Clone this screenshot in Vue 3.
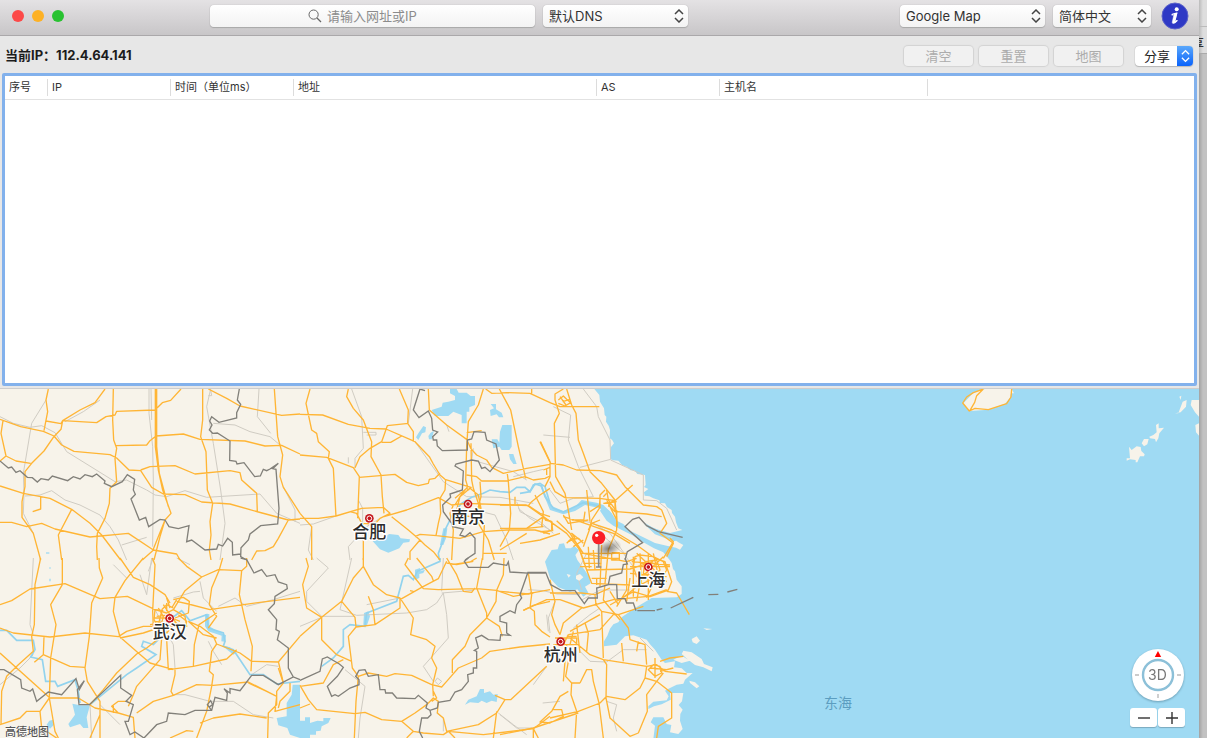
<script setup>
import { ref } from 'vue'

const query = ref('')
const dns = ref('默认DNS')
const provider = ref('Google Map')
const language = ref('简体中文')
const share = ref('分享')
const currentIp = '112.4.64.141'
const actions = ['清空', '重置', '地图']
const columns = [
  { name: '序号', cls: 'c-index' },
  { name: 'IP', cls: 'c-mid' },
  { name: '时间（单位ms）', cls: 'c-mid' },
  { name: '地址', cls: 'c-address' },
  { name: 'AS', cls: 'c-mid' },
  { name: '主机名', cls: 'c-host' },
  { name: '', cls: 'c-rest' }
]

const cities = [
  { name: '合肥', x: 1108, y: 388 },
  { name: '南京', x: 1404, y: 345 },
  { name: '武汉', x: 509, y: 688 },
  { name: '杭州', x: 1682, y: 758 },
  { name: '上海', x: 1945, y: 534 }
]

const land =
  'M0,0H1783L1798,18 1800,38 1812,58 1814,78 1819,83 1818,98 1826,110 1830,123 1829,148 1836,152 1842,163 1833,174 1832,181 1832,211 1840,214 1855,215 1866,228 1880,233 1892,244 1905,245 1912,255 1935,258 1937,288 1932,294 1945,300 1932,310 1934,320 1948,322 1960,328 1978,334 1980,342 1995,343 2001,354 2015,363 2016,372 2025,383 2028,400 2035,418 2047,423 2010,432 1960,418 1925,395 1950,415 1985,435 2015,445 2035,460 2050,468 2040,482 2028,476 2000,470 1965,462 1930,445 1890,425 1870,405 1850,395 1828,365 1810,352 1800,365 1820,395 1840,410 1870,425 1900,440 1930,460 1962,478 1990,490 2005,507 2015,522 2019,540 2025,547 2030,572 2045,592 2045,615 2030,625 1955,627 1935,639 1905,657 1865,685 1855,700 1840,706 1830,719 1822,740 1812,757 1812,772 1850,767 1875,742 1900,739 1940,752 1950,766 1965,782 1985,812 1995,822 2025,817 2022,835 2045,838 2060,852 2078,852 2055,872 2050,884 2030,887 2010,897 1995,905 2006,922 2000,934 1960,938 1945,952 1945,960 1962,952 1985,946 2012,932 2010,912 2050,912 2046,937 2036,948 2048,962 2041,975 2040,995 2048,1020 2035,1035 2010,1030 2014,1008 2000,1005 1990,985 1960,985 1952,1000 1965,1010 1960,1050H0Z'

const tiles = [
  {
    x: 0, y: -27,
    roads: 'M145,27 138,60 143,95 132,152M0,118 62,140 130,154 162,168 185,195 222,214 330,224 350,234 387,270 422,272 455,322 490,342 555,344 605,366 690,372 775,396 865,420 900,417M9,122 3,160 18,228 48,243 92,250M0,243 18,228M315,27 285,68 240,90 188,122 183,148 160,172 132,213 95,250 75,275 75,320 66,365 66,412 100,460 122,540M138,123 183,131 188,122 290,128 318,110 345,105 350,94 465,90 487,68 512,61 543,27M340,27 338,120 341,180 350,205 345,235 350,305 330,325 328,370 315,415 292,460 290,500 292,540M466,27V200L475,270 488,330 513,400 495,420 480,470 462,540M470,27V200L478,280 505,380M348,197 440,195 450,182 468,168 550,162 600,178 735,183 795,198 845,196 900,222M422,270 450,260 525,257 585,282 690,272 720,278 725,300 770,340 772,396M608,27V120L602,170 618,215 622,330 638,370 630,425 633,465 628,510 633,540M625,27 680,55 720,78 845,106 900,102M823,27 833,170 848,225 840,290 850,322 900,400M0,318 70,340 150,355 215,388 270,430 305,465 362,540M122,350V387L98,395M0,427H35L80,440 125,430 165,447 270,471 385,460 460,510 530,522 540,540M215,388 175,465 185,540M865,420 835,475 820,500 795,512 770,513 755,540M427,540 458,512 495,420',
    rails: 'M138,60 95,130 70,280 72,340 70,400 100,460M0,110 40,130 90,142 125,137 165,158 200,215 345,305 380,300 440,330 465,345 500,350 555,332 620,352 780,342 830,400 900,430M447,27V100L458,200 460,300 458,500M453,27 455,120M75,348 120,345 155,332 195,360 240,375 300,405 330,440 355,480 380,540M632,27 620,80 640,190 662,330 675,430 660,540M777,27 772,110 812,160M640,130 705,135 750,155 810,170 840,195M300,60 250,95 195,125M365,495 440,472M850,320 885,390 885,425M625,47H635L632,30',
    borders: 'M0,243 25,264 35,261 48,277 60,272 82,292 97,293 112,306 123,296 145,300 157,288 203,302 220,290 240,297 255,284 277,290 290,282 315,303 313,310 335,320 367,305 382,284 404,298 400,330 406,343 393,357 418,420 437,412 446,440 480,418 495,420 507,440 535,446 567,437 560,485 575,480 615,510 650,507 655,493 668,498 683,475 697,487 698,525 722,522M718,27 712,60 722,73 710,98 710,114 657,127 635,110 629,123 636,135 628,150 638,160 652,159 690,183 689,241 708,244 711,252 732,248 764,290 781,288 790,268 800,272 810,267 835,250 818,266 828,268 837,385 833,432 782,437 750,462 745,480 723,503 722,530 740,540',
    water: 'M138,517H148V521H138Z', rivers: ''
  },
  {
    x: 900, y: -27,
    roads: 'M30,27 18,70 35,150 50,160 55,185 88,215 85,235 100,265 108,410M0,103 68,105 145,133 210,145 258,147 345,185 388,230 400,252 420,285 435,298 515,323M145,27 140,50 160,85 190,120 205,160 215,185 213,230 243,285 247,350 252,400M0,225 80,232 160,263 178,290 173,415M325,130 262,137 245,185 210,205 180,230 165,263M245,187H272L305,168M298,27 325,90 323,130 340,155 340,185M178,292 285,283 320,307 355,317 385,310 388,298 405,295 420,280M385,27 388,90 440,135 500,178 512,205 530,225 560,240 575,262 610,280 680,265 750,253M550,27 535,75 505,125 500,200 497,300 503,320 480,350 465,375M513,190 515,300 520,325M500,158 545,152M557,27 575,40 620,38 690,40 750,68M695,27V45M598,27 632,90 655,200 677,295M722,185 750,245M500,285 530,290 545,303 620,303 675,290 700,300 735,295 750,288M437,298 435,330 420,355 422,400 415,430 408,467M0,415H55L108,408 185,385 250,382 270,400 240,415 225,432 185,430 170,400 150,395M252,410 320,390 415,353 455,375 500,370 685,377 695,365 720,345 750,325M622,282 625,305 632,400 628,450 600,500M0,400 35,440V540M190,430V540M275,410 325,450 360,480 375,495 400,515 420,540M360,480 330,515V540M345,470 360,463 410,467 480,475 550,455 620,450 705,450 750,462M520,325 540,385 535,430 565,480 583,540M685,377 720,400 750,410M548,540 553,435M480,350 510,325 535,345 543,385 520,410 490,408 470,390ZM465,355 500,325 508,330M540,305 543,350 530,400M460,375 450,400 460,450 455,540M620,520H548M645,350V372',
    rails: 'M155,27 185,110 190,205 165,235V265M190,157H228V165H200M0,435 40,432 108,408M345,185 430,305 500,350M500,350 600,352 700,370M325,130 338,27M545,395 585,405 620,480 640,540M240,415 200,440 145,500 150,540M520,205 515,240 640,275 680,300M35,440 25,510 40,540M145,232V250M440,135 447,155M175,360 188,385V430M655,385 690,415 750,450M640,290 700,275 730,268',
    borders: 'M360,27 340,90 357,113 385,93 395,115 398,150 413,156 398,170 400,180 410,180 412,198 427,212 502,210 502,180 515,177 522,155 555,157 560,180 588,192 598,240 570,275 555,262 545,265 535,243 515,240 468,252 465,258 485,270 490,273 487,330 450,342 452,352 428,375 430,395 455,430 458,440 490,447 480,465 495,470 510,458 525,475 525,520 495,540M360,27 375,32',
    water: 'M450,27H470L476,38H500L512,48H525V75L508,82V95H500V130H485V105L460,95 445,108H405L395,90 425,80 428,68 445,65 465,60V48L450,40ZM570,90 582,85 572,72H588V88L605,98 610,112H597L590,103 572,108ZM600,155 607,135H635V200L628,210H605L598,200 580,205 575,178H592L598,188ZM627,222H640L650,252H640L630,238ZM355,160 370,138 378,142 376,157 366,160 355,180 348,172ZM385,168 392,158 402,152 395,178H387ZM215,480 240,478 268,462 295,465 302,475 330,478 328,486 310,488 298,505 265,518 240,508Z M430,445H442L438,475 430,495H420Z',
    rivers: 'M418,540 415,520 430,480 435,450 460,400 485,370 515,352 550,340 570,330 600,335 630,337 650,322 675,322 690,335 700,315 720,310 735,320 750,370'
  },
  {
    x: 1500, y: -27,
    roads: 'M150,68 180,80 298,80M190,27 165,42 165,60 178,100 163,130 167,290 195,340 203,380 215,450M200,27 215,75 228,100 235,180 250,220 270,275 305,310 345,360 352,440M120,185 152,250 190,255 230,270 300,272 350,285 375,320 430,375 470,380 485,390 500,430 480,460 520,490 500,530M150,305 165,335 195,353 300,355 345,362 398,315M150,250V290L135,320M350,395 440,402 485,410M80,375 130,410 200,460 240,510M105,345 130,395 125,440M300,355 298,385 275,420 268,450 250,500M190,410 240,425 340,460 390,490M175,60 190,48 200,58 212,68 195,78 175,70M180,50 198,75M188,65 210,58M120,455 158,452 155,425 135,420M205,485 225,475 215,460 240,480M315,330 300,345V385M315,370 345,365M310,350 320,340M325,375 345,395V360M255,395 250,430M320,360 350,420M0,375H80M130,270 150,262M140,265V285M0,445 80,445 130,440M0,510 80,460M80,445 130,410M215,420H250M270,395 300,375',
    rails: 'M250,27 290,80 295,110 330,180 332,238 240,262M160,80 212,105 205,180 235,260 280,350 220,355 180,370 150,330M130,165 210,172M332,240 430,285V360L470,362 500,385 530,450M50,365 60,395 120,425 160,460M240,420 280,430 330,460 380,530',
    borders: 'M548,472 475,455 440,437 417,412 398,418 375,440 428,488 382,515 375,540',
    water: 'M118,312 130,330 155,378 190,393 225,380 245,360 290,368 310,375 335,400 350,425 375,440 348,440 325,420 300,385 255,375 225,393 190,403 150,390Z M430,430 470,448 500,468 540,480 520,484 465,463Z',
    rivers: 'M60,340 90,335 105,312 125,318 135,350 160,385 190,396 250,368 300,378'
  },
  {
    x: 1560, y: 303,
    roads: 'M110,92 150,130 190,190 240,200 320,215 350,205M0,160 60,150 120,130M215,100 275,120 350,165 405,205M290,60V120L265,180 257,260 250,330 300,390M200,240 330,237 400,215M205,120 215,100 240,90M150,130 175,170 200,240 215,280 330,285M260,0 265,30 290,65M130,75 145,100 205,90M180,190H320M185,205H300M190,220H245M180,180 200,240M205,170 208,235M220,180 225,240M245,165 240,290M275,190V210H298V188H275M150,150 175,145 190,160M140,160 155,145 170,160M160,170 190,150M230,265V285M215,265H260M180,230H215M345,200 360,195 400,200 430,215 440,240 425,265 385,270 350,260 340,230ZM340,200V320M360,190 365,290M375,215 410,210 420,240 400,260 370,250ZM330,230H450M335,215 450,225M330,250 440,260M385,190V330M400,190 420,280M350,190 440,275M350,275 430,200M300,330 350,290 390,270M270,345 340,305 390,320 445,300 455,275 435,215 405,205M320,215V300L290,350M200,0 210,95M70,85 95,95V120L70,130M430,205 460,155 450,145M280,30 265,50M250,40 290,35',
    rails: 'M240,130 310,190 340,230M185,330 240,300 330,300M200,190 170,250 185,300',
    borders: '',
    water: 'M75,215 95,180 113,178 118,162 132,160 137,175H152L163,168 177,180 166,195 172,210 190,235 208,260 212,280 195,290 205,308 190,320 172,298 150,305 115,292 90,265Z M430,185 450,190 468,205 465,216 445,205Z',
    rivers: ''
  },
  {
    x: 0, y: 507,
    roads: 'M0,140 35,128 90,93 195,77 300,122 382,115 465,155 490,158M122,0 105,80 103,200 95,235 100,280 55,320 20,355 5,400 3,500M187,0V80L152,140 168,200 152,300 150,360 148,420 165,520 175,540M297,0 298,30 308,60 275,135 268,235 255,330 262,370 300,430V540M430,0 375,68 345,118 340,160 360,237 415,285 450,315 520,335M360,0 400,58 450,80 495,110 510,135M457,0 465,20 458,160 460,210M0,210 40,225 150,237 255,225 355,236 380,220 430,205H475M485,235 440,270 410,288 350,345 310,395 270,440M475,210 430,225 360,240M0,285 150,420H235L285,450 355,465 400,478 405,540M103,313 130,290 210,325 255,328M130,290 132,235M535,0 560,25 605,57 555,98 520,155M605,57 655,35 725,38 740,25V0M668,0 658,35 635,90 628,140 650,175 625,210M725,38 718,110 725,140 735,185 757,265 753,340M900,118 780,133 715,142 630,155 565,138 530,130M520,125 550,118 568,130 565,165 525,180M500,245 505,335M580,325 583,260 597,200 650,165M505,335 580,325 680,303 710,275M755,310 835,312 900,235M565,190 600,205 640,235 650,258 720,285 755,310M650,258 635,280 628,340 640,350 635,385 620,460 590,540M485,240 480,305 410,385 400,410 385,445M525,335V350L513,400 520,412 590,380 640,382 745,372 830,415M410,465 460,430 520,412M510,540 560,518 580,520M600,495 640,480 720,468 800,480M745,375 800,400 830,415 825,460 900,440M835,310 850,375 830,400V440L805,465 803,540M0,500 60,480 80,460 120,460 148,420M120,460 125,510 170,540M355,465 335,445 355,430 385,430M300,470 270,540M340,465V440M565,190 610,230 650,240',
    rails: 'M100,0 90,200 100,230M420,50 440,110 455,0M465,155 520,260 525,330M600,100 580,102 520,120M600,70 610,120 650,160M555,410 630,430 700,430 760,470 820,480M520,410 555,410M270,440 275,540M0,380 60,330 100,290M900,100 820,125 740,145 705,120 655,145M625,250 640,280 665,320M460,0 445,40M340,20 380,60M755,350 800,320 835,325M530,0 570,20M300,440 360,500',
    borders: 'M0,335H12L62,365 65,390 90,400 98,393 110,430 145,402 185,410 228,362 238,395 253,368 232,395 237,440H268L362,352V390L395,412 378,430 400,440 385,490H375L390,530 405,522 432,540 470,500 500,490 505,465 555,470 585,457H635L645,418 680,427 682,405 672,392 690,405V392L720,398 755,352H790L835,380 880,357 900,365M635,457 622,440 632,428 638,440 626,448M722,0 740,5 762,45 785,35 800,55 825,50 835,72 860,80 862,92 825,115 823,137 805,155 830,185 828,215 838,220 832,245 865,270V330L880,357',
    water: 'M217,437 240,442H270L260,478 265,510H250L240,498 210,508 205,498 225,470ZM148,488 160,485 162,500 150,512 140,500ZM878,380H900V540L870,530 862,510 835,502 830,480 860,475V435L875,410ZM148,28H152V32H148ZM148,62H152V70H148ZM615,168H628V205L650,218 678,232 676,252 664,250 665,233 625,220 615,205ZM665,262 690,268 708,285 700,290Z',
    rivers: 'M0,217H20L50,247 100,247 105,275 92,297 127,305 137,370 165,370 173,385 225,365 235,400 240,435M270,440 380,350 410,330 468,290 425,265 430,250 460,260 480,240 510,185 545,158 570,188 620,170 625,210 670,225 675,250 670,265 700,275 750,350 790,350 830,378 900,370'
  },
  {
    x: 0, y: 507,
    roads: 'M465,155 500,165 520,155 555,175 560,205 525,195 500,225 475,210 462,185ZM475,150 490,175 480,215M490,140 510,170 540,210M485,155 500,140 520,150M500,120 510,150M460,180H500M450,200 480,195 520,205M535,170 560,190 555,210M515,150 530,125M515,180 540,190M485,160 475,200M465,190 500,195M470,175 495,172M500,135V160M835,330 850,375M835,450 840,430 870,400V375',
    rails: 'M450,205 500,210', borders: '', water: '', rivers: ''
  },
  {
    x: 900, y: 507,
    roads: 'M18,0 25,25 8,80 20,150 65,178V245L110,290 155,310M190,0V25L160,60 125,130 65,178 0,235M190,25 220,80 260,110 300,120 340,180 332,230 380,245 405,265 395,300 410,330 398,380 400,415M325,0 315,20 345,60 370,92 415,95 530,92 590,97 640,115 750,95M300,125 365,88 415,62 440,10M350,0 395,55 400,68M225,200 220,155 205,115M125,130 150,160 165,178 168,207 225,200 300,150 300,120M168,207 145,235 157,330 175,355 168,430 163,540M175,355 205,345 260,355 285,347 335,352 395,380 425,387 440,370 475,330 545,300 570,280 660,267 750,258M457,345V305L495,265 510,230 560,180 598,205 607,235M440,0 470,50 490,100 515,103 525,90M547,0 530,90 560,165V180L588,130 590,97 610,50 612,0M685,45 695,110 690,150 703,160 705,200 725,220 750,237M670,157 700,142 750,130M0,382 25,425 50,455 165,467 195,463 245,485 305,490 345,465 380,440 400,420 415,430 412,465 430,480 440,520 535,500 590,465 615,425M585,412 615,425H632L740,325M305,490 340,520 370,525 430,530 445,520 550,530 700,512 750,475M445,520 465,540M590,460 580,540M0,385 70,375 100,320 130,305M0,450 30,438M440,15 470,20 520,10M455,20 510,12 530,0M330,98 340,100M320,540 340,520M700,512 715,540M395,430 410,420 400,400',
    rails: 'M155,0 120,155 170,172 320,165 380,155 410,135 430,105 440,170 445,240 370,325 400,370M200,140 300,120M50,0 85,30 20,100V130L65,175H165M430,0 425,100M595,465 640,500 680,530M135,335 195,385 180,480 175,540M410,465 430,480V520M405,370 412,360 425,370 415,380ZM0,205 65,178M425,105 520,97M740,170 745,220M740,325 700,380',
    borders: 'M0,367 60,340 67,303 82,297 118,318 130,328 112,355 82,385 95,415 105,410 115,415 150,390 177,380V365L167,355 177,337 195,335 205,355 235,350 240,395H255L257,405 277,405 290,420 345,422 355,412 382,435 378,450 390,457 412,450 415,433 450,427 465,402 485,395 505,370 503,350 520,345V330H530V280L523,277 535,270 527,240 545,232 565,245 600,247 602,230 630,232 620,225V195L600,190V175L630,158 645,165 650,140 665,120 660,110 683,45 630,42 625,12 620,22 580,15 565,28H505L493,10 505,0M390,457 393,470 383,480H365L358,520 368,540M683,45H737',
    water: 'M0,488 15,488V478H30V495L52,488 70,490V480H92L85,495 65,505 62,518 48,520V530H30V540H0ZM495,440 505,425 530,415 540,393H552V405L570,400 580,410 593,408 590,432 575,428 560,435 545,428 535,435 510,433ZM192,165 205,160 210,175 200,205 190,200ZM345,35 360,30V40L375,35 370,45 358,48V60L345,65Z',
    rivers: 'M65,325 100,300 130,265 130,215 150,200 195,205 200,165 290,130 310,55 325,52 340,65 352,40 420,10V0'
  },
  {
    x: 1500, y: 507,
    roads: 'M150,65 160,110 165,130 155,170 165,200 180,230M70,157 140,125 180,125 250,150 340,125 445,115 500,95M180,230 190,195 245,150M205,230 300,215 340,170 355,170M210,240 270,290 310,305 440,325M285,110 288,140 305,160 355,170 385,210 390,245 435,260 440,320M305,160 310,300M355,170 430,145M365,255 370,310M410,280 415,250M440,325 470,320 495,340 560,348M440,325 435,360 470,370 490,345M480,310 510,300 550,295M435,360 420,390 375,425 320,415 300,435 235,460 150,480M310,305 320,320 318,420 330,480 390,535 415,525M205,310 197,355 215,375 213,410 230,460 225,540M240,375 215,375M240,375 260,335 275,335 280,370 297,435 310,540M470,370 515,405V480L475,505 470,540M205,400 180,415 155,460 120,492 150,495 190,475 185,455H160M470,370 440,410 442,460 415,525M0,530 100,510 235,465M100,510V540M500,100 530,105 568,170M150,105 245,105 285,110 330,90M165,240H230V260H165M205,230 190,260 160,260M220,220 210,260M240,285 230,200M200,235H230M255,195 265,225 260,280M420,75 410,130M200,260 195,310 190,370M445,335 460,320 480,325 485,345 465,355ZM465,300V360M450,330 500,335M480,340 520,330M210,220 300,170M390,60 380,130M330,100 355,140M465,65 440,120M0,100 85,108 100,105',
    rails: 'M150,225 145,180 165,130M240,280 270,310 320,312 370,275 440,275M220,210 270,170 300,150M320,430 350,440 340,480 350,520M128,435 180,430M85,95 130,98 170,108 240,110M550,280 600,310M420,240 460,280M0,470 50,510 100,510',
    borders: 'M82,43H137L152,80 185,98H225L253,137 265,120H292L290,90 325,80 330,55 365,45 370,20 382,18 375,0M325,80H350L352,122H375L380,135H400L408,158M412,158H465M470,156 487,152M512,150 580,118M625,110 655,109M682,102 712,94',
    water: '', rivers: ''
  }
]

const islands =
  'M2050,785 2075,790 2105,810 2112,825 2138,835 2135,847 2110,835 2085,828 2062,810 2045,795ZM2075,750 2090,742 2100,755 2090,765 2078,760ZM2110,718 2137,720 2120,723ZM2068,875 2085,880 2098,892 2090,898 2070,882ZM1728,560 1740,555 1750,565 1738,575 1728,570ZM1700,555 1712,558 1706,566ZM2020,812 2045,800 2070,815 2045,822Z'
const eastIslands =
  'M88,66 70,85 88,108 145,104 195,86 210,68 213,55 222,55 215,42H135L100,53ZM567,215 575,225 590,214 602,216 604,228 614,238 612,244H600L592,262H587V255L570,253 560,257V250H570ZM605,205 612,192H626L622,208 612,214ZM628,185 640,180 650,172 648,150 656,145V160L672,158 658,175 655,190 648,202 645,192 630,190ZM705,115H715L728,80 740,75 738,95 722,112ZM755,75H777V125L765,112 752,90ZM766,150 777,145V182L768,172ZM755,150 763,145ZM718,65 724,62 722,75Z'
const islandRoad = 'M130,42 100,53 80,66 68,84 88,108 105,100 145,104 200,86 213,66 215,42M130,42 110,62 104,82 90,106'
</script>

<template>
  <div class="desktop">
    <main class="window">
      <header class="titlebar">
        <div class="lights">
          <button class="light red" aria-label="关闭"></button>
          <button class="light amber" aria-label="最小化"></button>
          <button class="light green" aria-label="缩放"></button>
        </div>
        <label class="field search">
          <svg width="14" height="14" viewBox="0 0 14 14" fill="none" stroke="#666" aria-hidden="true">
            <circle cx="5.6" cy="5.6" r="4.6" />
            <path d="M9 9l4 4" stroke-width="1.3" />
          </svg>
          <input v-model="query" type="text" placeholder="请输入网址或IP" aria-label="网址或IP" />
        </label>
        <div class="field pick dns">
          <select v-model="dns" aria-label="DNS"><option>默认DNS</option></select>
          <svg class="chev" viewBox="0 0 10 14" aria-hidden="true"><path d="M1 5l4-4 4 4M1 9l4 4 4-4" /></svg>
        </div>
        <div class="field pick provider">
          <select v-model="provider" aria-label="地图服务"><option>Google Map</option></select>
          <svg class="chev" viewBox="0 0 10 14" aria-hidden="true"><path d="M1 5l4-4 4 4M1 9l4 4 4-4" /></svg>
        </div>
        <div class="field pick language">
          <select v-model="language" aria-label="语言"><option>简体中文</option></select>
          <svg class="chev" viewBox="0 0 10 14" aria-hidden="true"><path d="M1 5l4-4 4 4M1 9l4 4 4-4" /></svg>
        </div>
        <button class="info" aria-label="关于">
          <svg width="28" height="28" viewBox="0 0 28 28" aria-hidden="true">
            <circle cx="14" cy="14" r="13" fill="#2f39c5" stroke="#5b62c9" />
            <circle cx="15.7" cy="7.2" r="2" fill="#fff" />
            <path d="M10.6 12.6C12.3 12 13.7 11.4 15.8 11.2L13.6 19.5C13.4 20.6 14.3 20.3 16 18.3M10.6 12.8l2-.2" fill="none" stroke="#fff" stroke-width="1.2" />
            <path d="M13 12.2L15.8 11.2 13.9 19.2C13.8 20.2 14.6 19.8 16 18.2L16.5 18.6C14.5 21.6 11 22.6 11.3 20z" fill="#fff" stroke="#fff" stroke-width=".5" />
          </svg>
        </button>
      </header>

      <section class="toolbar">
        <strong>当前IP：{{ currentIp }}</strong>
        <div class="actions">
          <button v-for="a in actions" :key="a" class="action" disabled>{{ a }}</button>
          <div class="share">
            <select v-model="share" aria-label="分享"><option>分享</option></select>
            <span class="stepper">
              <svg class="chev" viewBox="0 0 10 14" aria-hidden="true"><path d="M1 5l4-4 4 4M1 9l4 4 4-4" /></svg>
            </span>
          </div>
        </div>
      </section>

      <section class="results">
        <table>
          <thead>
            <tr><th v-for="(c, i) in columns" :key="i" :class="c.cls" scope="col">{{ c.name }}</th></tr>
          </thead>
          <tbody></tbody>
        </table>
      </section>

      <section class="map">
        <svg class="canvas" viewBox="0 0 3597 1047" preserveAspectRatio="xMinYMin slice" role="img" aria-label="地图">
          <defs>
            <radialGradient id="shade"><stop offset="0" stop-color="#333" stop-opacity=".6" /><stop offset="1" stop-color="#333" stop-opacity="0" /></radialGradient>
          </defs>
          <path :d="land" class="land" />
          <g v-for="(t, i) in tiles" :key="'w' + i" :transform="`translate(${t.x} ${t.y})`">
            <path :d="t.water" class="water" />
            <path :d="t.rails" class="rail" />
            <path :d="t.rivers" class="river" />
          </g>
          <path :d="islands" class="land" />
          <g v-for="(t, i) in tiles" :key="'r' + i" :transform="`translate(${t.x} ${t.y})`">
            <path :d="t.roads" class="road" />
          </g>
          <g v-for="(t, i) in tiles" :key="'b' + i" :transform="`translate(${t.x} ${t.y})`">
            <path :d="t.borders" class="border" />
          </g>
          <g transform="translate(2820 -42)">
            <path :d="eastIslands" class="land" />
            <path :d="islandRoad" class="road" />
          </g>
          <g v-for="c in cities" :key="c.name">
            <circle :cx="c.x" :cy="c.y" r="13" fill="#c4161c" />
            <circle :cx="c.x" :cy="c.y" r="7" fill="#c4161c" stroke="#fff" stroke-width="3" />
            <text :x="c.x" :y="c.y + 58" class="city">{{ c.name }}</text>
          </g>
          <ellipse cx="1826" cy="478" rx="40" ry="24" fill="url(#shade)" transform="rotate(-20 1826 478)" />
          <path d="M1796 450V534M1788 534H1804" stroke="#8a8a8a" stroke-width="5" />
          <circle cx="1796" cy="446" r="20" fill="#fb1f27" />
          <circle cx="1790" cy="439" r="5" fill="#fff" />
          <text x="2514" y="957" class="sea">东海</text>
        </svg>
        <span class="credit">高德地图</span>
        <div class="controls">
          <button class="compass" aria-label="3D">
            <svg width="54" height="54" viewBox="0 0 54 54" aria-hidden="true">
              <circle cx="27" cy="27" r="26" fill="#fff" />
              <circle cx="27" cy="27" r="15" fill="#fff" stroke="#8cc0d8" stroke-width="2.4" />
              <path d="M27 3l3.2 6h-6.4z" fill="#f00" />
              <path d="M4 27h4M46 27h4M27 46v4" stroke="#bbb" stroke-width="1.4" />
            </svg>
            <span>3D</span>
          </button>
          <div class="zoom">
            <button aria-label="缩小"><svg width="12" height="12" viewBox="0 0 12 12" aria-hidden="true"><path d="M0 6h12" /></svg></button>
            <button aria-label="放大"><svg width="12" height="12" viewBox="0 0 12 12" aria-hidden="true"><path d="M0 6h12M6 0v12" /></svg></button>
          </div>
        </div>
      </section>
    </main>
    <aside class="behind"><div class="behind-top"><span>享</span></div></aside>
  </div>
</template>

<style>
body {
  margin: 0;
}
</style>

<style scoped>
.desktop {
  display: flex;
  min-height: 100vh;
  font: 13px/16px Inter, "Noto Sans CJK SC", sans-serif;
  color: #333;
  background: #c4c4c4;
}
button,
input,
select {
  font: inherit;
  margin: 0;
  padding: 0;
  border: 0;
  background: none;
  color: inherit;
  appearance: none;
  outline: 0;
}
.window {
  flex: 1;
  min-width: 0;
  display: flex;
  flex-direction: column;
  background: #e7e7e7;
}
.titlebar {
  display: flex;
  align-items: center;
  height: 36px;
  box-sizing: border-box;
  padding: 0 10px 3px 12px;
  background: linear-gradient(#e4e2e4, #c8c6c8);
  border-bottom: 1px solid #aaa8aa;
}
.lights {
  display: flex;
  gap: 8px;
  margin-right: 146px;
}
.light {
  width: 12px;
  height: 12px;
  border-radius: 50%;
}
.red { background: #fc4948; }
.amber { background: #fdb125; }
.green { background: #29c231; }
.field {
  display: flex;
  align-items: center;
  height: 22px;
  box-sizing: border-box;
  border-radius: 4px;
  background: linear-gradient(#fff, #f3f3f3);
  box-shadow: 0 0 1px #999, 0 1px 1px #aaa;
}
.search {
  width: 325px;
  justify-content: center;
  gap: 5px;
  margin-right: 8px;
}
.search input {
  width: 110px;
}
.search input::placeholder {
  color: #8c8c8c;
  opacity: 1;
}
.pick {
  position: relative;
}
.pick select {
  width: 100%;
  height: 22px;
  padding: 0 20px 0 6px;
}
.chev {
  width: 10px;
  height: 14px;
  fill: none;
  stroke: #444;
  stroke-width: 1.5;
}
.pick .chev {
  position: absolute;
  right: 4px;
  top: 4px;
  pointer-events: none;
}
.dns,
.provider {
  width: 145px;
}
.provider {
  margin-left: auto;
}
.language {
  width: 98px;
  margin: 0 10px 0 8px;
}
.info {
  height: 28px;
}
.toolbar {
  display: flex;
  align-items: center;
  justify-content: space-between;
  height: 37px;
  padding: 0 6px 0 5px;
}
.toolbar strong {
  color: #1c1c1c;
}
.actions {
  display: flex;
  align-items: center;
  gap: 6px;
  padding-top: 2px;
}
.action {
  width: 69px;
  height: 20px;
  border-radius: 4px;
  background: #f1f1f1;
  box-shadow: 0 0 1px 1px #d2d2d2;
  color: #acacac;
}
.share {
  position: relative;
  display: flex;
  width: 58px;
  height: 20px;
  margin-left: 6px;
  border-radius: 4px;
  overflow: hidden;
  background: #fff;
  box-shadow: 0 0 1px #999, 0 1px 1px #bbb;
  color: #222;
}
.share select {
  width: 100%;
  padding-left: 9px;
}
.stepper {
  position: absolute;
  right: 0;
  top: 0;
  width: 16px;
  height: 20px;
  display: grid;
  place-items: center;
  background: linear-gradient(#5ba8fb, #0a63fb);
  pointer-events: none;
}
.stepper .chev {
  width: 9px;
  stroke: #fff;
}
.results {
  flex: 307 1 0;
  margin: 0 2px;
  border: 3px solid #82b1ec;
  border-radius: 2px;
  background: #fff;
}
table {
  width: 100%;
  table-layout: fixed;
  border-collapse: collapse;
}
th {
  height: 23px;
  box-sizing: border-box;
  padding: 0 4px;
  border-bottom: 1px solid #e2e2e2;
  text-align: left;
  font-size: 11px;
  font-weight: 400;
  line-height: 16px;
  white-space: nowrap;
  background: linear-gradient(#dcdcdc, #dcdcdc) right 3px / 1px 17px no-repeat;
}
.c-index { width: 43px; }
.c-mid { width: 123px; }
.c-address { width: 303px; }
.c-host { width: 208px; }
.c-rest { background: none; }
.map {
  position: relative;
  flex: 349 1 0;
  margin-top: 2px;
  border-top: 1px solid #cdcdcd;
  overflow: hidden;
  background: #9fdaf3;
}
.canvas {
  position: absolute;
  width: 100%;
  height: 100%;
}
.land { fill: #f7f3ea; }
.water { fill: #9fdaf3; }
.rail {
  fill: none;
  stroke: #d0ccc3;
  stroke-width: 3;
}
.river {
  fill: none;
  stroke: #92d3ee;
  stroke-width: 5;
}
.road {
  fill: none;
  stroke: #ffb535;
  stroke-width: 4;
  stroke-linejoin: round;
}
.border {
  fill: none;
  stroke: #82807a;
  stroke-width: 4;
}
.city {
  font-size: 51px;
  font-weight: 500;
  text-anchor: middle;
  fill: #2c2c2c;
  stroke: #fff;
  stroke-width: 8px;
  stroke-linejoin: round;
  paint-order: stroke;
}
.sea {
  font-size: 42px;
  text-anchor: middle;
  fill: #5b9dc0;
}
.credit {
  position: absolute;
  left: 5px;
  bottom: 0;
  font-size: 11px;
  line-height: 12px;
  font-weight: 500;
  color: #555;
  text-shadow: 0 0 1px #fff, 0 1px 1px #fff;
}
.controls {
  position: absolute;
  right: 14px;
  bottom: 11px;
  display: flex;
  flex-direction: column;
  align-items: center;
  gap: 6px;
}
.compass {
  position: relative;
  width: 54px;
  height: 54px;
  border-radius: 50%;
  filter: drop-shadow(0 1px 1px #6a9db4);
}
.compass span {
  position: absolute;
  inset: 0;
  display: grid;
  place-items: center;
  font-size: 14px;
  color: #777;
}
.zoom {
  display: flex;
  gap: 1px;
}
.zoom button {
  width: 27px;
  height: 19px;
  display: grid;
  place-items: center;
  border-radius: 3px;
  background: #fff;
  box-shadow: 0 1px 1px #7ba9be;
}
.zoom path {
  stroke: #333;
  stroke-width: 1.4;
}
.behind {
  width: 8px;
  background: linear-gradient(90deg, #a2a2a2, #c2c2c2 4px);
  overflow: hidden;
}
.behind-top {
  display: flex;
  justify-content: flex-end;
  height: 54px;
  margin-bottom: 37px;
  padding: 35px 3px 0 0;
  box-sizing: border-box;
  background: linear-gradient(#bbb, #bbb) 0 26px / 100% 1px no-repeat, linear-gradient(90deg, #bbb, #dedede 4px);
  border-bottom: 1px solid #aaa;
  font-weight: 500;
}
</style>
